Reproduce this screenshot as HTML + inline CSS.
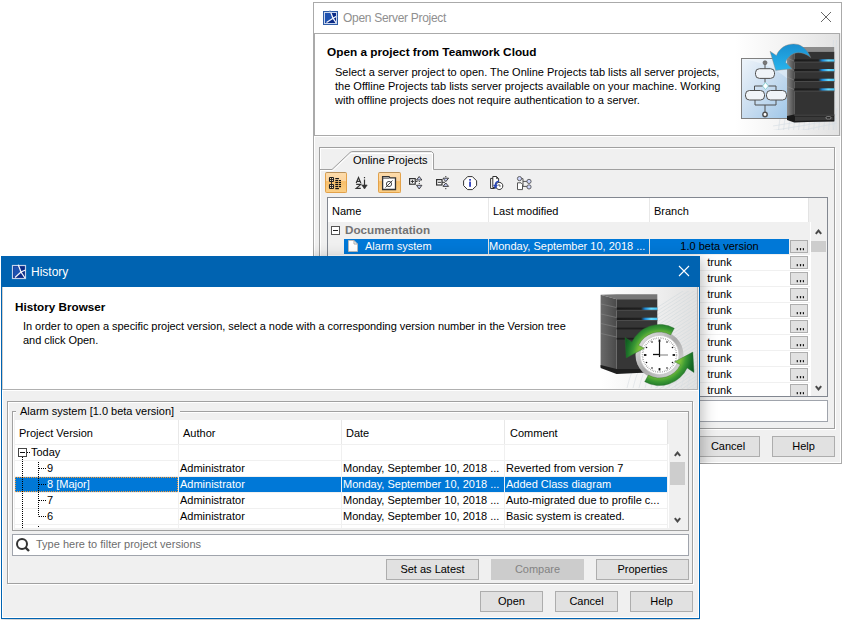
<!DOCTYPE html>
<html><head><meta charset="utf-8">
<style>
*{box-sizing:border-box;margin:0;padding:0}
html,body{width:842px;height:620px;overflow:hidden;background:#fff;font-family:"Liberation Sans",sans-serif;font-size:11px;color:#000}
.a{position:absolute}
.t{position:absolute;white-space:nowrap;line-height:13px}
.btn{position:absolute;background:#e1e1e1;border:1px solid #adadad;text-align:center;line-height:19px;white-space:nowrap}
.bold{font-weight:bold}
</style></head><body>

<!-- ============ TOP DIALOG: Open Server Project ============ -->
<div class="a" style="left:313px;top:2px;width:529px;height:462px;border:1px solid #aaaaaa;background:#f0f0f0"></div>
<div class="a" style="left:314px;top:3px;width:527px;height:30px;background:#fff"></div>
<svg class="a" style="left:322px;top:10px" width="17" height="16" viewBox="0 0 17 16">
 <rect x="1.5" y="1.5" width="14" height="13" fill="#fff" stroke="#2f5ca6" stroke-width="1"/>
 <rect x="3" y="3" width="11" height="10" fill="#0a2a86"/>
 <path d="M3 3 L8 3 L11 8.5 L4.5 12.5 L3 12.5Z" fill="#1f52b0"/>
 <path d="M8.2 1 L11 8.2 L14.2 13 M4.5 12.5 L11 8.2 L15 6" stroke="#f4f6fb" stroke-width="1.3" fill="none"/>
 <rect x="2.5" y="2.5" width="12" height="11" fill="none" stroke="#c9d6ee" stroke-width="1"/>
 <path d="M8 0.5 L9 2" stroke="#2f5ca6"/>
</svg>
<div class="t" style="left:343px;top:11px;font-size:12px;letter-spacing:-0.3px;color:#8f8f8f;line-height:14px">Open Server Project</div>
<svg class="a" style="left:820px;top:11px" width="12" height="12" viewBox="0 0 12 12"><path d="M1 1L11 11M11 1L1 11" stroke="#666" stroke-width="1"/></svg>
<!-- header panel -->
<div class="a" style="left:314px;top:136px;width:527px;height:327px;border:1px solid #fff;border-top-color:#fff"></div>
<div class="a" style="left:314px;top:33px;width:526px;height:103px;background:#fff;border:1px solid #aaaaaa"></div>
<div class="a" style="left:700px;top:34px;width:139px;height:101px;background:linear-gradient(90deg,rgba(255,255,255,0) 0%,#fff 25%,#f3f3f3 60%,#e2e2e2 100%)"></div>
<div class="t bold" style="left:327px;top:46px;font-size:11.8px">Open a project from Teamwork Cloud</div>
<div class="t" style="left:335px;top:66px;line-height:13.8px">Select a server project to open. The Online Projects tab lists all server projects,<br>the Offline Projects tab lists server projects available on your machine. Working<br>with offline projects does not require authentication to a server.</div>
<!-- header image -->
<svg class="a" style="left:738px;top:40px" width="100" height="90" viewBox="0 0 100 90">
 <defs>
  <linearGradient id="dg1" x1="0" y1="0" x2="1" y2="1"><stop offset="0" stop-color="#eef4fa"/><stop offset="0.5" stop-color="#c9ddf0"/><stop offset="1" stop-color="#9ec6e8"/></linearGradient>
  <linearGradient id="led1" x1="0" y1="0" x2="1" y2="0"><stop offset="0" stop-color="#1a1a1a"/><stop offset="0.6" stop-color="#202020"/><stop offset="0.7" stop-color="#1a88d8"/><stop offset="0.85" stop-color="#6adcff"/><stop offset="1" stop-color="#40c0f4"/></linearGradient>
  <linearGradient id="ar1" x1="0" y1="0" x2="0" y2="1"><stop offset="0" stop-color="#1a8fd0"/><stop offset="1" stop-color="#28b4ec"/></linearGradient>
  <linearGradient id="sf1" x1="0" y1="0" x2="1" y2="0"><stop offset="0" stop-color="#8a8a8a"/><stop offset="1" stop-color="#4a4a4a"/></linearGradient>
 </defs>
 <g stroke="#d3dbe2" stroke-width="0.6" fill="none"><path d="M40 95 Q41 82 44 68"/><path d="M45 95 Q46 82 49 68"/><path d="M50 95 Q51 82 54 68"/><path d="M55 95 Q56 82 59 68"/><path d="M60 95 Q61 82 64 68"/><path d="M65 95 Q66 82 69 68"/><path d="M70 95 Q71 82 74 68"/><path d="M75 95 Q76 82 79 68"/><path d="M80 95 Q81 82 84 68"/><path d="M85 95 Q86 82 89 68"/><path d="M90 95 Q91 82 94 68"/><path d="M95 95 Q96 82 99 68"/><path d="M35 86 Q70 81 99 74"/><path d="M35 90.5 Q70 85.5 99 78.5"/><path d="M35 95 Q70 90 99 83"/><path d="M95.5 0 Q92.5 45 95.5 95"/><path d="M98.5 0 Q95.5 45 98.5 95"/></g>
 <rect x="3.5" y="18.5" width="48" height="60" fill="url(#dg1)" stroke="#808080"/>
 <path d="M4 19 Q30 22 51 40 L51 19Z" fill="#fff" opacity="0.35"/>
 <circle cx="27" cy="22.7" r="2" fill="#777" stroke="#555" stroke-width="0.6"/>
 <line x1="27" y1="24.5" x2="27" y2="28.7" stroke="#555"/>
 <rect x="17.5" y="28.7" width="19" height="9.7" rx="4" fill="#f0f4f8" stroke="#505050"/>
 <line x1="27" y1="38.4" x2="27" y2="42.5" stroke="#555"/>
 <path d="M27.5 42.5 L30.5 46 L27.5 49.5 L24.5 46Z" fill="#fff" stroke="#7cc" stroke-width="0.8"/>
 <path d="M24.5 46 H16.5 V50 M30.5 46 H38 V50" stroke="#505050" fill="none"/>
 <rect x="7.5" y="50.5" width="19" height="9.5" rx="4" fill="#f0f4f8" stroke="#505050"/>
 <rect x="28.5" y="50.5" width="20" height="9.5" rx="4" fill="#f0f4f8" stroke="#505050"/>
 <path d="M17 60 V65 H38 V60 M27 65 V72" stroke="#505050" fill="none"/>
 <circle cx="27" cy="74.5" r="2.2" fill="#fff" stroke="#505050" stroke-width="1.5"/>
 <!-- server -->
 <path d="M49 8.5 L56.3 7 L96.2 7 L96.2 11.6 L56.3 11.6Z" fill="#8c8c8c"/>
 <path d="M49 8.5 L56.3 11.6 L56.3 82 L49 78Z" fill="url(#sf1)"/>
 <rect x="56.3" y="11.6" width="40" height="70" fill="#333"/>
 <g stroke="#999" stroke-width="0.6" opacity="0.7"><path d="M49 18 L56 21 M49 27.5 L56 30.5 M49 37 L56 40 M49 46.5 L56 49.5"/></g>
 <rect x="56.3" y="19.3" width="40" height="2.6" fill="url(#led1)"/>
 <rect x="56.3" y="29.0" width="40" height="2.6" fill="url(#led1)"/>
 <rect x="56.3" y="38.7" width="40" height="2.6" fill="url(#led1)"/>
 <rect x="56.3" y="48.3" width="40" height="2.6" fill="url(#led1)"/>
 <rect x="56.3" y="21.6" width="40" height="1" fill="#4a4a4a"/>
 <rect x="56.3" y="31.3" width="40" height="1" fill="#4a4a4a"/>
 <rect x="56.3" y="41" width="40" height="1" fill="#4a4a4a"/>
 <rect x="56.3" y="50.6" width="40" height="1" fill="#4a4a4a"/>
 <path d="M49 76 L56.3 74.6 L96.2 74.6 L96.2 81 L56.3 82.5 L49 80Z" fill="#1a1a1a"/><path d="M57 76.5 L95.5 76.5 L95.5 80 L57 81Z" fill="#3a3a3a"/>
 <rect x="56.3" y="74.6" width="40" height="1" fill="#555"/>
 <rect x="88" y="76.6" width="5" height="2.4" rx="1.2" fill="#222" stroke="#bbb" stroke-width="0.6"/>
 <!-- arrow -->
 <path d="M32 11.2 L38.4 15.5 C42 6 52 2.5 60 4.5 C66 6.5 70 11 72.7 17.6 C68 13.5 61 11.5 56 13.5 C51.5 15.5 48.5 19 47.7 22.3 L54 28.7 L37.7 30.4 Z" fill="url(#ar1)" stroke="#a08070" stroke-width="0.4"/>
</svg>

<!-- outer etched panel -->
<div class="a" style="left:320px;top:148px;width:516px;height:282px;border:1px solid #fff"></div>
<div class="a" style="left:319px;top:147px;width:516px;height:282px;border:1px solid #a0a0a0"></div>
<!-- tab -->
<svg class="a" style="left:319px;top:150px" width="516" height="22" viewBox="0 0 516 22">
 <path d="M1 19.5 H13 L31 2.5 Q32 1.5 34 1.5 H112.5 L114.5 3.5 V19.5 H515" fill="none" stroke="#a0a0a0" stroke-width="1"/>
 <path d="M2 20.5 H14 L32 3.5 H113.5 V20.5" fill="none" stroke="#fff" stroke-width="1"/>
</svg>
<div class="t" style="left:353px;top:154px;color:#000">Online Projects</div>

<!-- toolbar -->
<div class="a" style="left:325px;top:172px;width:22px;height:21px;border:1px solid #e3a24a;border-top-color:#b8905a;border-radius:2px;background:linear-gradient(#fddcab 0%,#fcd49e 42%,#f8bf6a 45%,#fbcf86 100%)"></div>
<div class="a" style="left:378px;top:172px;width:23px;height:21px;border:1px solid #e3a24a;border-top-color:#b8905a;border-radius:2px;background:linear-gradient(#fddcab 0%,#fcd49e 42%,#f8bf6a 45%,#fbcf86 100%)"></div>
<svg class="a" style="left:324px;top:172px" width="210" height="21" viewBox="0 0 210 21">
 <!-- icon1 -->
 <g>
  <rect x="5.5" y="5.5" width="4" height="4" rx="0.6" fill="#fde2b8" stroke="#222" stroke-width="1.1"/>
  <rect x="5.5" y="12.5" width="4" height="4" rx="0.6" fill="#fde2b8" stroke="#222" stroke-width="1.1"/>
  <path d="M7.5 5.5V9.5M5.5 7.5H9.5M7.5 12.5V16.5M5.5 14.5H9.5M7.5 10V12" stroke="#222" stroke-width="0.9"/>
  <g fill="#111"><rect x="11.3" y="6" width="3.6" height="1.2"/><rect x="11.3" y="8" width="3" height="1.2"/><rect x="11.3" y="10" width="3" height="1.2"/><rect x="11.3" y="12" width="3" height="1.2"/><rect x="11.3" y="14" width="3" height="1.2"/><rect x="11.3" y="16" width="3.6" height="1.2"/>
  <rect x="15" y="8" width="2" height="1.2"/><rect x="15" y="10" width="2" height="1.2"/><rect x="15" y="12" width="2" height="1.2"/><rect x="15" y="14" width="2" height="1.2"/></g>
 </g>
 <!-- icon2 A-Z sort -->
 <g fill="none" stroke="#333" stroke-width="1.2">
  <path d="M32.2 11 L34.5 5.5 L36.8 11 M33 9.3 H36"/>
  <path d="M32.2 12.4 H36.8 L32.2 16.4 H36.8"/>
  <path d="M40.5 5 V6.2 M40.5 7.6 V14"/>
  <path d="M37.8 13 L40.5 17 L43.2 13Z" fill="#333" stroke-width="0.6"/>
 </g>
 <!-- icon3 folder with slash -->
 <g fill="none" stroke="#333">
  <path d="M58.6 4.6 H65 L66 5.8 H71.5 V17.5 H58.6Z" fill="#fff" stroke-width="1.3"/>
  <path d="M58.6 6.2 H65.3" stroke-width="1" stroke="#555"/>
  <circle cx="65" cy="12" r="2.6" stroke-width="0.9"/>
  <line x1="61.5" y1="15.5" x2="68.5" y2="8.5" stroke-width="0.9"/>
 </g>
 <!-- icon4 expand -->
 <g stroke="#333" fill="none">
  <rect x="85.6" y="6.6" width="5.6" height="5.6" fill="#fff" stroke-width="1.2"/><path d="M86.8 9.4H90M88.4 7.8V11" stroke-width="1"/>
  <path d="M91.5 9.4H93.5"/>
  <path d="M92.5 8 L95.2 4.5 L97.9 8Z" fill="#c4cbf0" stroke-width="0.9"/><path d="M92.5 13.3 L95.2 17 L97.9 13.3Z" fill="#c4cbf0" stroke-width="0.9"/>
  <path d="M95.3 9V12.5" stroke-dasharray="1 1"/>
 </g>
 <!-- icon5 collapse -->
 <g stroke="#333" fill="none">
  <rect x="112.6" y="7.6" width="5.4" height="5.4" fill="#fff" stroke-width="1.2"/><path d="M113.8 10.3H117" stroke-width="1"/>
  <path d="M118 10.3H121"/>
  <path d="M119 6.2 L124.6 6.2 L121.8 9.6Z" fill="#c4cbf0" stroke-width="0.9"/><path d="M119 14.4 L124.6 14.4 L121.8 11Z" fill="#c4cbf0" stroke-width="0.9"/>
  <path d="M121.8 4V5.2 M121.8 16V17.2"/>
 </g>
 <!-- icon6 info -->
 <g>
  <path d="M143.6 4.6 H148.4 L152.6 8.8 V13.6 L148.4 17.6 H143.6 L139.6 13.6 V8.8Z" fill="#fff" stroke="#333" stroke-width="1"/>
  <rect x="145.2" y="7" width="1.7" height="1.7" fill="#2233bb"/><rect x="145.2" y="9.6" width="1.7" height="5.2" fill="#2233bb"/>
 </g>
 <!-- icon7 docs with clock -->
 <g stroke="#333">
  <path d="M166.6 6.4 H170.5 V16.5 H166.6Z" fill="#fff" stroke-width="1"/>
  <path d="M168.8 4.5 H172.5 L174.6 6.6 V15.5 H168.8Z" fill="#fff" stroke-width="1"/>
  <path d="M172.5 4.5 V6.6 H174.6" fill="none" stroke-width="0.8"/>
  <path d="M174.2 10.5 A3.6 3.6 0 1 1 174.2 17.4 A3.6 3.6 0 0 1 174.2 10.5Z" fill="#fff" stroke-width="1"/>
  <path d="M175 12V14H176.8" fill="none" stroke-width="0.8"/>
  <path d="M175 9.2 C172.5 9.2 171.4 11 171.5 13.5" fill="none" stroke="#2a48b8" stroke-width="1.6"/>
  <path d="M169.6 13 L171.5 16.6 L173.4 13Z" fill="#2a48b8" stroke="#2a48b8" stroke-width="0.6"/>
 </g>
 <!-- icon8 hierarchy -->
 <g stroke="#555">
  <path d="M195.6 6.6 H199 V14.4 H204.5 M199 9.4 H204.5" fill="none" stroke-width="1"/>
  <circle cx="195.5" cy="6.6" r="2.1" fill="#cdd4fa" stroke-width="0.9"/>
  <circle cx="205" cy="9.4" r="2.1" fill="#cdd4fa" stroke-width="0.9"/>
  <circle cx="205" cy="14.9" r="2.1" fill="#cdd4fa" stroke-width="0.9"/>
  <path d="M193.5 10.8 H197 L198.5 12.3 V17.6 H193.5Z" fill="#fff" stroke-width="1"/>
 </g>
</svg>

<!-- table -->
<div class="a" style="left:327px;top:197px;width:501px;height:200px;border:1px solid #828790;background:#f0f0f0"></div>
<div class="a" style="left:328px;top:198px;width:499px;height:198px;overflow:hidden">
<div class="a" style="left:0px;top:0px;width:480px;height:24px;background:#fff"></div><div class="a" style="left:160px;top:0px;width:1px;height:24px;background:#e8e8e8"></div><div class="a" style="left:321px;top:0px;width:1px;height:24px;background:#e8e8e8"></div><div class="a" style="left:480px;top:0px;width:1px;height:24px;background:#e3e3e3"></div><div class="t" style="left:4px;top:7px">Name</div><div class="t" style="left:165px;top:7px">Last modified</div><div class="t" style="left:326px;top:7px">Branch</div>
<div class="a" style="left:482px;top:24px;width:1px;height:174px;background:#fff"></div><svg class="a" style="left:3px;top:28px" width="10" height="10" viewBox="0 0 10 10"><rect x="0.5" y="0.5" width="8" height="8" fill="#fff" stroke="#555"/><path d="M2 4.5H7" stroke="#222"/></svg><div class="t bold" style="left:17px;top:25px;font-size:11.7px;color:#737373">Documentation</div>
<div class="a" style="left:16px;top:41px;width:445px;height:15px;background:#0078d7"></div><div class="a" style="left:160px;top:41px;width:1px;height:15px;background:#e0e0e0"></div><div class="a" style="left:321px;top:41px;width:1px;height:15px;background:#e0e0e0"></div><div class="a" style="left:0px;top:56px;width:482px;height:1px;background:#f0f0f0"></div><svg class="a" style="left:19px;top:42px" width="12" height="12" viewBox="0 0 12 12"><path d="M1.5 0.5 H7 L10.5 4 V11.5 H1.5Z" fill="#fff" stroke="#bbb"/><path d="M7 0.5V4H10.5" fill="none" stroke="#aaa"/></svg><div class="t" style="left:37px;top:42px;color:#fff">Alarm system</div><div class="t" style="left:161px;top:42px;color:#fff">Monday, September 10, 2018 ...</div><div class="t" style="left:322px;top:42px;width:139px;text-align:center;color:#000">1.0 beta version</div><div class="btn" style="left:462px;top:42px;width:18px;height:13px;line-height:11px;font-size:10px"><svg class="a" style="left:4px;top:7px" width="10" height="3" viewBox="0 0 10 3"><rect x="1.7" y="0" width="1.2" height="2.2" rx="0.5" fill="#111"/><rect x="4.9" y="0" width="1.2" height="2.2" rx="0.5" fill="#111"/><rect x="7.8" y="0" width="1.2" height="2.2" rx="0.5" fill="#111"/></svg></div>
<div class="a" style="left:0px;top:57px;width:482px;height:15px;background:#fff"></div><div class="a" style="left:0px;top:72px;width:482px;height:1px;background:#f0f0f0"></div><div class="a" style="left:160px;top:57px;width:1px;height:16px;background:#f0f0f0"></div><div class="a" style="left:321px;top:57px;width:1px;height:16px;background:#f0f0f0"></div><div class="t" style="left:322px;top:58px;width:139px;text-align:center">trunk</div><div class="btn" style="left:462px;top:58px;width:18px;height:13px;line-height:11px;font-size:10px"><svg class="a" style="left:4px;top:7px" width="10" height="3" viewBox="0 0 10 3"><rect x="1.7" y="0" width="1.2" height="2.2" rx="0.5" fill="#111"/><rect x="4.9" y="0" width="1.2" height="2.2" rx="0.5" fill="#111"/><rect x="7.8" y="0" width="1.2" height="2.2" rx="0.5" fill="#111"/></svg></div>
<div class="a" style="left:0px;top:73px;width:482px;height:15px;background:#fff"></div><div class="a" style="left:0px;top:88px;width:482px;height:1px;background:#f0f0f0"></div><div class="a" style="left:160px;top:73px;width:1px;height:16px;background:#f0f0f0"></div><div class="a" style="left:321px;top:73px;width:1px;height:16px;background:#f0f0f0"></div><div class="t" style="left:322px;top:74px;width:139px;text-align:center">trunk</div><div class="btn" style="left:462px;top:74px;width:18px;height:13px;line-height:11px;font-size:10px"><svg class="a" style="left:4px;top:7px" width="10" height="3" viewBox="0 0 10 3"><rect x="1.7" y="0" width="1.2" height="2.2" rx="0.5" fill="#111"/><rect x="4.9" y="0" width="1.2" height="2.2" rx="0.5" fill="#111"/><rect x="7.8" y="0" width="1.2" height="2.2" rx="0.5" fill="#111"/></svg></div>
<div class="a" style="left:0px;top:89px;width:482px;height:15px;background:#fff"></div><div class="a" style="left:0px;top:104px;width:482px;height:1px;background:#f0f0f0"></div><div class="a" style="left:160px;top:89px;width:1px;height:16px;background:#f0f0f0"></div><div class="a" style="left:321px;top:89px;width:1px;height:16px;background:#f0f0f0"></div><div class="t" style="left:322px;top:90px;width:139px;text-align:center">trunk</div><div class="btn" style="left:462px;top:90px;width:18px;height:13px;line-height:11px;font-size:10px"><svg class="a" style="left:4px;top:7px" width="10" height="3" viewBox="0 0 10 3"><rect x="1.7" y="0" width="1.2" height="2.2" rx="0.5" fill="#111"/><rect x="4.9" y="0" width="1.2" height="2.2" rx="0.5" fill="#111"/><rect x="7.8" y="0" width="1.2" height="2.2" rx="0.5" fill="#111"/></svg></div>
<div class="a" style="left:0px;top:105px;width:482px;height:15px;background:#fff"></div><div class="a" style="left:0px;top:120px;width:482px;height:1px;background:#f0f0f0"></div><div class="a" style="left:160px;top:105px;width:1px;height:16px;background:#f0f0f0"></div><div class="a" style="left:321px;top:105px;width:1px;height:16px;background:#f0f0f0"></div><div class="t" style="left:322px;top:106px;width:139px;text-align:center">trunk</div><div class="btn" style="left:462px;top:106px;width:18px;height:13px;line-height:11px;font-size:10px"><svg class="a" style="left:4px;top:7px" width="10" height="3" viewBox="0 0 10 3"><rect x="1.7" y="0" width="1.2" height="2.2" rx="0.5" fill="#111"/><rect x="4.9" y="0" width="1.2" height="2.2" rx="0.5" fill="#111"/><rect x="7.8" y="0" width="1.2" height="2.2" rx="0.5" fill="#111"/></svg></div>
<div class="a" style="left:0px;top:121px;width:482px;height:15px;background:#fff"></div><div class="a" style="left:0px;top:136px;width:482px;height:1px;background:#f0f0f0"></div><div class="a" style="left:160px;top:121px;width:1px;height:16px;background:#f0f0f0"></div><div class="a" style="left:321px;top:121px;width:1px;height:16px;background:#f0f0f0"></div><div class="t" style="left:322px;top:122px;width:139px;text-align:center">trunk</div><div class="btn" style="left:462px;top:122px;width:18px;height:13px;line-height:11px;font-size:10px"><svg class="a" style="left:4px;top:7px" width="10" height="3" viewBox="0 0 10 3"><rect x="1.7" y="0" width="1.2" height="2.2" rx="0.5" fill="#111"/><rect x="4.9" y="0" width="1.2" height="2.2" rx="0.5" fill="#111"/><rect x="7.8" y="0" width="1.2" height="2.2" rx="0.5" fill="#111"/></svg></div>
<div class="a" style="left:0px;top:137px;width:482px;height:15px;background:#fff"></div><div class="a" style="left:0px;top:152px;width:482px;height:1px;background:#f0f0f0"></div><div class="a" style="left:160px;top:137px;width:1px;height:16px;background:#f0f0f0"></div><div class="a" style="left:321px;top:137px;width:1px;height:16px;background:#f0f0f0"></div><div class="t" style="left:322px;top:138px;width:139px;text-align:center">trunk</div><div class="btn" style="left:462px;top:138px;width:18px;height:13px;line-height:11px;font-size:10px"><svg class="a" style="left:4px;top:7px" width="10" height="3" viewBox="0 0 10 3"><rect x="1.7" y="0" width="1.2" height="2.2" rx="0.5" fill="#111"/><rect x="4.9" y="0" width="1.2" height="2.2" rx="0.5" fill="#111"/><rect x="7.8" y="0" width="1.2" height="2.2" rx="0.5" fill="#111"/></svg></div>
<div class="a" style="left:0px;top:153px;width:482px;height:15px;background:#fff"></div><div class="a" style="left:0px;top:168px;width:482px;height:1px;background:#f0f0f0"></div><div class="a" style="left:160px;top:153px;width:1px;height:16px;background:#f0f0f0"></div><div class="a" style="left:321px;top:153px;width:1px;height:16px;background:#f0f0f0"></div><div class="t" style="left:322px;top:154px;width:139px;text-align:center">trunk</div><div class="btn" style="left:462px;top:154px;width:18px;height:13px;line-height:11px;font-size:10px"><svg class="a" style="left:4px;top:7px" width="10" height="3" viewBox="0 0 10 3"><rect x="1.7" y="0" width="1.2" height="2.2" rx="0.5" fill="#111"/><rect x="4.9" y="0" width="1.2" height="2.2" rx="0.5" fill="#111"/><rect x="7.8" y="0" width="1.2" height="2.2" rx="0.5" fill="#111"/></svg></div>
<div class="a" style="left:0px;top:169px;width:482px;height:15px;background:#fff"></div><div class="a" style="left:0px;top:184px;width:482px;height:1px;background:#f0f0f0"></div><div class="a" style="left:160px;top:169px;width:1px;height:16px;background:#f0f0f0"></div><div class="a" style="left:321px;top:169px;width:1px;height:16px;background:#f0f0f0"></div><div class="t" style="left:322px;top:170px;width:139px;text-align:center">trunk</div><div class="btn" style="left:462px;top:170px;width:18px;height:13px;line-height:11px;font-size:10px"><svg class="a" style="left:4px;top:7px" width="10" height="3" viewBox="0 0 10 3"><rect x="1.7" y="0" width="1.2" height="2.2" rx="0.5" fill="#111"/><rect x="4.9" y="0" width="1.2" height="2.2" rx="0.5" fill="#111"/><rect x="7.8" y="0" width="1.2" height="2.2" rx="0.5" fill="#111"/></svg></div>
<div class="a" style="left:0px;top:185px;width:482px;height:15px;background:#fff"></div><div class="a" style="left:0px;top:200px;width:482px;height:1px;background:#f0f0f0"></div><div class="a" style="left:160px;top:185px;width:1px;height:16px;background:#f0f0f0"></div><div class="a" style="left:321px;top:185px;width:1px;height:16px;background:#f0f0f0"></div><div class="t" style="left:322px;top:186px;width:139px;text-align:center">trunk</div><div class="btn" style="left:462px;top:186px;width:18px;height:13px;line-height:11px;font-size:10px"><svg class="a" style="left:4px;top:7px" width="10" height="3" viewBox="0 0 10 3"><rect x="1.7" y="0" width="1.2" height="2.2" rx="0.5" fill="#111"/><rect x="4.9" y="0" width="1.2" height="2.2" rx="0.5" fill="#111"/><rect x="7.8" y="0" width="1.2" height="2.2" rx="0.5" fill="#111"/></svg></div>
<svg class="a" style="left:486px;top:30px" width="10" height="8" viewBox="0 0 10 8"><path d="M1.8 5.8 L4.5 2.6 L7.2 5.8" stroke="#4a4a4a" stroke-width="2" fill="none"/></svg><div class="a" style="left:483px;top:43px;width:15px;height:11px;background:#cdcdcd"></div><svg class="a" style="left:486px;top:185px" width="10" height="8" viewBox="0 0 10 8"><path d="M1.8 3.2 L4.5 6.4 L7.2 3.2" stroke="#4a4a4a" stroke-width="2" fill="none"/></svg>
</div>

<!-- filter -->
<div class="a" style="left:327px;top:400px;width:501px;height:22px;border:1px solid #a0a4ac;background:#fff"></div>

<!-- buttons -->
<div class="btn" style="left:696px;top:436px;width:64px;height:21px">Cancel</div>
<div class="btn" style="left:772px;top:436px;width:63px;height:21px">Help</div>

<!-- ============ HISTORY DIALOG ============ -->
<div class="a" style="left:1px;top:256px;width:699px;height:363px;background:#f0f0f0;border:1px solid #0063b1;box-shadow:2px 3px 14px rgba(0,0,0,0.28)"></div>
<div class="a" style="left:2px;top:390px;width:697px;height:228px;border:1px solid #fff;border-top-color:#fff"></div>
<div class="a" style="left:1px;top:256px;width:699px;height:31px;background:#0063b1"></div>
<svg class="a" style="left:11px;top:264px" width="16" height="16" viewBox="0 0 16 16">
 <rect x="1.5" y="1.5" width="13" height="13" fill="#0a2a86" stroke="#c4d2ea" stroke-width="1.2"/>
 <path d="M2.5 2.5 L7 2.5 L10 8 L4 12.5 L2.5 12.5Z" fill="#1f52b0"/>
 <path d="M7.2 0.8 L10 8 L14 14 M4 13.5 L10 8 L14.5 6" stroke="#f4f6fb" stroke-width="1.3" fill="none"/>
</svg>
<div class="t" style="left:31px;top:265px;font-size:12px;color:#fff;line-height:14px">History</div>
<svg class="a" style="left:678px;top:265px" width="12" height="12" viewBox="0 0 12 12"><path d="M1 1L11 11M11 1L1 11" stroke="#fff" stroke-width="1.1"/></svg>

<!-- header -->
<div class="a" style="left:2px;top:287px;width:696px;height:103px;background:#fff;border:1px solid #b0b0b0;border-top:none;border-left-color:#d4d0cc"></div>
<div class="a" style="left:560px;top:287px;width:137px;height:102px;background:linear-gradient(90deg,rgba(255,255,255,0) 0%,#fff 30%,#f2f2f2 65%,#e0e0e0 100%)"></div>
<div class="t bold" style="left:15px;top:300px;font-size:11.7px">History Browser</div>
<div class="t" style="left:23px;top:320px;line-height:13.5px;letter-spacing:-0.045px">In order to open a specific project version, select a node with a corresponding version number in the Version tree<br>and click Open.</div>
<svg class="a" style="left:597px;top:289px" width="100" height="100" viewBox="0 0 100 100">
 <defs>
  <linearGradient id="led2" x1="0" y1="0" x2="1" y2="0"><stop offset="0" stop-color="#1a1a1a"/><stop offset="0.6" stop-color="#202020"/><stop offset="0.7" stop-color="#1a88d8"/><stop offset="0.85" stop-color="#6adcff"/><stop offset="1" stop-color="#40c0f4"/></linearGradient>
  <linearGradient id="sf2" x1="0" y1="0" x2="1" y2="0"><stop offset="0" stop-color="#6a6a6a"/><stop offset="1" stop-color="#4a4a4a"/></linearGradient>
  <radialGradient id="gr2" cx="62.5" cy="66" r="36" gradientUnits="userSpaceOnUse"><stop offset="0.6" stop-color="#7cc03a"/><stop offset="0.74" stop-color="#3c9a34"/><stop offset="0.9" stop-color="#1a7028"/><stop offset="1" stop-color="#0f5e20"/></radialGradient>
  <linearGradient id="gr2b" x1="0" y1="0" x2="1" y2="0"><stop offset="0" stop-color="#1a6e2a" stop-opacity="0.9"/><stop offset="0.5" stop-color="#1a6e2a" stop-opacity="0"/><stop offset="1" stop-color="#1a6e2a" stop-opacity="0.9"/></linearGradient>
  <linearGradient id="ring2" x1="0" y1="0" x2="1" y2="1"><stop offset="0" stop-color="#f4f4f4"/><stop offset="0.5" stop-color="#a8a8a8"/><stop offset="1" stop-color="#e8e8e8"/></linearGradient>
 </defs>
 <clipPath id="hc2"><rect x="58" y="2" width="42" height="98"/></clipPath><g stroke="#d2dade" stroke-width="0.6" fill="none" clip-path="url(#hc2)"><path d="M58 20.0 L100 -7.0"/><path d="M58 23.6 L100 -3.4"/><path d="M58 27.2 L100 0.2"/><path d="M58 30.8 L100 3.8"/><path d="M58 34.4 L100 7.4"/><path d="M58 38.0 L100 11.0"/><path d="M58 41.6 L100 14.6"/><path d="M58 45.2 L100 18.2"/><path d="M58 48.8 L100 21.8"/><path d="M58 52.4 L100 25.4"/><path d="M58 56.0 L100 29.0"/><path d="M58 59.6 L100 32.6"/><path d="M58 63.2 L100 36.2"/><path d="M58 66.8 L100 39.8"/><path d="M58 70.4 L100 43.4"/><path d="M58 74.0 L100 47.0"/><path d="M58 77.6 L100 50.6"/><path d="M58 81.2 L100 54.2"/><path d="M58 84.8 L100 57.8"/><path d="M58 88.4 L100 61.4"/><path d="M58 92.0 L100 65.0"/><path d="M58 95.6 L100 68.6"/><path d="M58 99.2 L100 72.2"/><path d="M58 102.8 L100 75.8"/><path d="M58 106.4 L100 79.4"/><path d="M58 110.0 L100 83.0"/><path d="M58 113.6 L100 86.6"/><path d="M58 117.2 L100 90.2"/><path d="M58 120.8 L100 93.8"/><path d="M58 124.4 L100 97.4"/></g><g stroke="#d8dee2" stroke-width="0.6" fill="none"><path d="M30 99 Q32 90 36 80"/><path d="M36 99 Q38 90 42 80"/><path d="M42 99 Q44 90 48 80"/><path d="M48 99 Q50 90 54 80"/><path d="M54 99 Q56 90 60 80"/><path d="M60 99 Q62 90 66 80"/><path d="M66 99 Q68 90 72 80"/><path d="M72 99 Q74 90 78 80"/><path d="M78 99 Q80 90 84 80"/><path d="M84 99 Q86 90 90 80"/><path d="M90 99 Q92 90 96 80"/><path d="M96 99 Q98 90 102 80"/></g>
 <!-- server -->
 <path d="M3.6 5.8 L19.6 5.2 L60.3 5.2 L60.3 10.2 L19.6 10.2Z" fill="#777"/>
 <path d="M3.6 5.8 L19.6 10.2 L19.6 84 L3.6 78Z" fill="url(#sf2)"/>
 <rect x="19.6" y="10.2" width="40.7" height="73" fill="#363636"/>
 <g stroke="#8a8a8a" stroke-width="0.7" opacity="0.8"><path d="M4 15 L19.5 18.5 M4 25 L19.5 28.5 M4 34.5 L19.5 38 M4 44.5 L19.5 48"/></g>
 <rect x="19.6" y="18.5" width="40.7" height="2.6" fill="url(#led2)"/>
 <rect x="19.6" y="28.7" width="40.7" height="2.6" fill="url(#led2)"/>
 <rect x="19.6" y="38.6" width="40.7" height="1.8" fill="#1e1e1e"/>
 <rect x="19.6" y="48.8" width="40.7" height="1.8" fill="#1e1e1e"/>
 <rect x="19.6" y="20.8" width="40.7" height="1" fill="#4c4c4c"/>
 <rect x="19.6" y="31" width="40.7" height="1" fill="#4c4c4c"/>
 <path d="M3.6 76 L19.6 80 L60.3 80 L60.3 83 L19.6 85 L3.6 79Z" fill="#1e1e1e"/>
 <!-- clock -->
 <circle cx="62.5" cy="66" r="24" fill="url(#ring2)"/>
 <circle cx="62.5" cy="66" r="19.5" fill="#fff" stroke="#c8c8c8" stroke-width="0.8"/>
 <circle cx="62.5" cy="66" r="17" fill="none" stroke="#777" stroke-width="1.6" stroke-dasharray="0.5 1.28"/>
 <g fill="#111">
  <rect x="61.6" y="50.5" width="1.8" height="2.4"/><rect x="61.6" y="79.1" width="1.8" height="2.4"/>
  <rect x="47" y="65.1" width="2.4" height="1.8"/><rect x="75.6" y="65.1" width="2.4" height="1.8"/>
  <circle cx="70" cy="53" r="0.8"/><circle cx="75.5" cy="58.5" r="0.8"/><circle cx="75.5" cy="73.5" r="0.8"/><circle cx="70" cy="79" r="0.8"/>
  <circle cx="55" cy="79" r="0.8"/><circle cx="49.5" cy="73.5" r="0.8"/><circle cx="49.5" cy="58.5" r="0.8"/><circle cx="55" cy="53" r="0.8"/>
 </g>
 <path d="M62.5 68 V52.5" stroke="#111" stroke-width="1.2"/>
 <path d="M56 65.5 H63" stroke="#111" stroke-width="1.3"/>
 <path d="M62.5 66 H71" stroke="#444" stroke-width="0.7"/>
 <!-- arrows -->
 <path d="M77.3 39.3 A30.5 30.5 0 0 0 34.86 53.1 L28 48.4 L29.2 68.9 L47.3 59.25 L41.65 56.3 A23 23 0 0 1 73.65 45.9 Z" fill="url(#gr2)" stroke="#2a6a30" stroke-width="0.4"/>
 <path d="M47.7 92.7 A30.5 30.5 0 0 0 90.14 78.9 L97 83.6 L95.8 63.1 L77.7 72.75 L83.35 75.7 A23 23 0 0 1 51.35 86.1 Z" fill="url(#gr2)" stroke="#2a6a30" stroke-width="0.4"/>
</svg>

<!-- outer etched panel -->
<div class="a" style="left:8px;top:402px;width:686px;height:183px;border:1px solid #fff"></div>
<div class="a" style="left:7px;top:401px;width:686px;height:183px;border:1px solid #a0a0a0"></div>
<!-- group box -->
<div class="a" style="left:13px;top:412px;width:676px;height:119px;border:1px solid #fff"></div>
<div class="a" style="left:12px;top:411px;width:677px;height:120px;border:1px solid #a0a0a0"></div>
<div class="t" style="left:16px;top:405px;background:#f0f0f0;padding:0 6px 0 4px">Alarm system [1.0 beta version]</div>
<!-- table -->
<div class="a" style="left:15px;top:420px;width:672px;height:108px;background:#f0f0f0;overflow:hidden">
 <div class="a" style="left:0;top:0;width:653px;height:24px;background:#fff"></div>
 <div class="a" style="left:163px;top:0;width:1px;height:24px;background:#e8e8e8"></div>
 <div class="a" style="left:326px;top:0;width:1px;height:24px;background:#e8e8e8"></div>
 <div class="a" style="left:489px;top:0;width:1px;height:24px;background:#e8e8e8"></div>
 <div class="a" style="left:652px;top:0;width:1px;height:24px;background:#e3e3e3"></div>
 <div class="t" style="left:4px;top:7px">Project Version</div>
 <div class="t" style="left:168px;top:7px">Author</div>
 <div class="t" style="left:331px;top:7px">Date</div>
 <div class="t" style="left:495px;top:7px">Comment</div>
 <div class="a" style="left:0;top:24px;width:654px;height:84px;background:#fff"></div>
 <div class="a" style="left:0;top:24px;width:653px;height:1px;background:#f0f0f0"></div><div class="a" style="left:163px;top:24px;width:1px;height:16px;background:#f0f0f0"></div><div class="a" style="left:326px;top:24px;width:1px;height:16px;background:#f0f0f0"></div><div class="a" style="left:489px;top:24px;width:1px;height:16px;background:#f0f0f0"></div><div class="a" style="left:652px;top:24px;width:1px;height:16px;background:#f0f0f0"></div><div class="t" style="left:16px;top:26px;color:#000">Today</div>
 <div class="a" style="left:0;top:40px;width:653px;height:1px;background:#f0f0f0"></div><div class="a" style="left:163px;top:40px;width:1px;height:16px;background:#f0f0f0"></div><div class="a" style="left:326px;top:40px;width:1px;height:16px;background:#f0f0f0"></div><div class="a" style="left:489px;top:40px;width:1px;height:16px;background:#f0f0f0"></div><div class="a" style="left:652px;top:40px;width:1px;height:16px;background:#f0f0f0"></div><div class="t" style="left:32px;top:42px;color:#000">9</div><div class="t" style="left:165px;top:42px;color:#000">Administrator</div><div class="t" style="left:328px;top:42px;color:#000">Monday, September 10, 2018 ...</div><div class="t" style="left:491px;top:42px;color:#000">Reverted from version 7</div>
 <div class="a" style="left:0;top:56px;width:653px;height:1px;background:#f0f0f0"></div><div class="a" style="left:0;top:57px;width:652px;height:15px;background:#0078d7"></div><div class="a" style="left:163px;top:56px;width:1px;height:16px;background:#eef0f3"></div><div class="a" style="left:326px;top:56px;width:1px;height:16px;background:#eef0f3"></div><div class="a" style="left:489px;top:56px;width:1px;height:16px;background:#eef0f3"></div><div class="a" style="left:652px;top:56px;width:1px;height:16px;background:#eef0f3"></div><div class="t" style="left:32px;top:58px;color:#fff">8 [Major]</div><div class="t" style="left:165px;top:58px;color:#fff">Administrator</div><div class="t" style="left:328px;top:58px;color:#fff">Monday, September 10, 2018 ...</div><div class="t" style="left:491px;top:58px;color:#fff">Added Class diagram</div>
 <div class="a" style="left:0;top:72px;width:653px;height:1px;background:#f0f0f0"></div><div class="a" style="left:163px;top:72px;width:1px;height:16px;background:#f0f0f0"></div><div class="a" style="left:326px;top:72px;width:1px;height:16px;background:#f0f0f0"></div><div class="a" style="left:489px;top:72px;width:1px;height:16px;background:#f0f0f0"></div><div class="a" style="left:652px;top:72px;width:1px;height:16px;background:#f0f0f0"></div><div class="t" style="left:32px;top:74px;color:#000">7</div><div class="t" style="left:165px;top:74px;color:#000">Administrator</div><div class="t" style="left:328px;top:74px;color:#000">Monday, September 10, 2018 ...</div><div class="t" style="left:491px;top:74px;color:#000">Auto-migrated due to profile c...</div>
 <div class="a" style="left:0;top:88px;width:653px;height:1px;background:#f0f0f0"></div><div class="a" style="left:163px;top:88px;width:1px;height:16px;background:#f0f0f0"></div><div class="a" style="left:326px;top:88px;width:1px;height:16px;background:#f0f0f0"></div><div class="a" style="left:489px;top:88px;width:1px;height:16px;background:#f0f0f0"></div><div class="a" style="left:652px;top:88px;width:1px;height:16px;background:#f0f0f0"></div><div class="t" style="left:32px;top:90px;color:#000">6</div><div class="t" style="left:165px;top:90px;color:#000">Administrator</div><div class="t" style="left:328px;top:90px;color:#000">Monday, September 10, 2018 ...</div><div class="t" style="left:491px;top:90px;color:#000">Basic system is created.</div>
 <div class="a" style="left:0;top:104px;width:653px;height:1px;background:#f0f0f0"></div><div class="a" style="left:163px;top:104px;width:1px;height:16px;background:#f0f0f0"></div><div class="a" style="left:326px;top:104px;width:1px;height:16px;background:#f0f0f0"></div><div class="a" style="left:489px;top:104px;width:1px;height:16px;background:#f0f0f0"></div><div class="a" style="left:652px;top:104px;width:1px;height:16px;background:#f0f0f0"></div>
 <svg class="a" style="left:0;top:24px" width="40" height="84" viewBox="0 0 40 84"><rect x="3.5" y="4.5" width="8" height="8" fill="#fff" stroke="#444"/><path d="M5 8.5H10" stroke="#111"/><g stroke="#000" stroke-dasharray="1 1" stroke-width="1"><path d="M12 8.5H16"/><path d="M7.5 13V84"/><path d="M23.5 18V72.5"/><path d="M24 24.5H32"/><path d="M24 40.5H32"/><path d="M24 56.5H32"/><path d="M24 72.5H32"/><path d="M23.5 82V84"/></g></svg>
 <div class="a" style="left:0;top:57px;width:163px;height:15px;border:1px dotted #f59a35"></div>
</div>
<!-- scrollbar -->
<svg class="a" style="left:672px;top:449px" width="11" height="9" viewBox="0 0 11 9"><path d="M2.8 6.8 L5.5 3.6 L8.2 6.8" stroke="#4a4a4a" stroke-width="2" fill="none"/></svg>
<div class="a" style="left:670px;top:462px;width:15px;height:23px;background:#cdcdcd"></div>
<svg class="a" style="left:672px;top:515px" width="11" height="9" viewBox="0 0 11 9"><path d="M2.8 3.2 L5.5 6.4 L8.2 3.2" stroke="#4a4a4a" stroke-width="2" fill="none"/></svg>

<!-- filter -->
<div class="a" style="left:12px;top:534px;width:677px;height:22px;border:1px solid #a0a4ac;background:#fff"></div>
<svg class="a" style="left:15px;top:537px" width="16" height="16" viewBox="0 0 16 16"><circle cx="7" cy="7" r="5" fill="none" stroke="#333" stroke-width="2"/><path d="M10.6 10.6 L14 14" stroke="#333" stroke-width="2.4"/></svg>
<div class="t" style="left:36px;top:538px;color:#6d6d6d">Type here to filter project versions</div>

<div class="btn" style="left:386px;top:559px;width:93px;height:21px">Set as Latest</div>
<div class="btn" style="left:491px;top:559px;width:93px;height:21px;background:#cccccc;border-color:#cccccc;color:#838383">Compare</div>
<div class="btn" style="left:596px;top:559px;width:93px;height:21px">Properties</div>

<div class="btn" style="left:480px;top:591px;width:63px;height:21px">Open</div>
<div class="btn" style="left:555px;top:591px;width:63px;height:21px">Cancel</div>
<div class="btn" style="left:630px;top:591px;width:63px;height:21px">Help</div>

<!-- clip desktop shadow -->
<div class="a" style="left:0;top:236px;width:313px;height:20px;background:#fff"></div>
<div class="a" style="left:0;top:256px;width:1px;height:364px;background:#fff"></div>
<div class="a" style="left:700px;top:464px;width:142px;height:156px;background:#fff"></div>
</body></html>
